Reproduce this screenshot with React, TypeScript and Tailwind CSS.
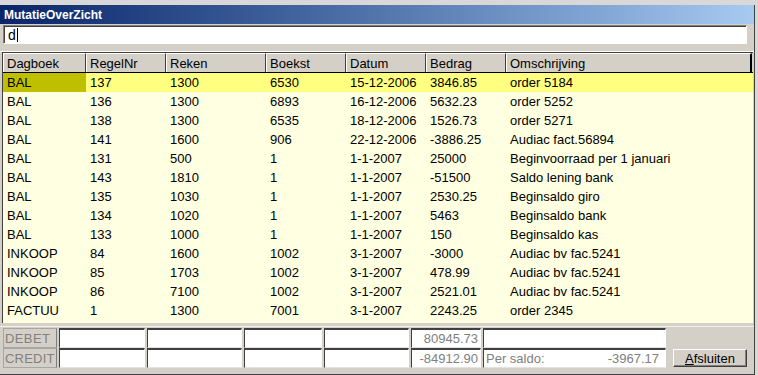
import React from "react";

const cols = [83, 80, 100, 80, 80, 80, 246];
const headers = ["Dagboek", "RegelNr", "Reken", "Boekst", "Datum", "Bedrag", "Omschrijving"];
const rows: string[][] = [
  ["BAL", "137", "1300", "6530", "15-12-2006", "3846.85", "order 5184"],
  ["BAL", "136", "1300", "6893", "16-12-2006", "5632.23", "order 5252"],
  ["BAL", "138", "1300", "6535", "18-12-2006", "1526.73", "order 5271"],
  ["BAL", "141", "1600", "906", "22-12-2006", "-3886.25", "Audiac fact.56894"],
  ["BAL", "131", "500", "1", "1-1-2007", "25000", "Beginvoorraad per 1 januari"],
  ["BAL", "143", "1810", "1", "1-1-2007", "-51500", "Saldo lening bank"],
  ["BAL", "135", "1030", "1", "1-1-2007", "2530.25", "Beginsaldo giro"],
  ["BAL", "134", "1020", "1", "1-1-2007", "5463", "Beginsaldo bank"],
  ["BAL", "133", "1000", "1", "1-1-2007", "150", "Beginsaldo kas"],
  ["INKOOP", "84", "1600", "1002", "3-1-2007", "-3000", "Audiac bv fac.5241"],
  ["INKOOP", "85", "1703", "1002", "3-1-2007", "478.99", "Audiac bv fac.5241"],
  ["INKOOP", "86", "7100", "1002", "3-1-2007", "2521.01", "Audiac bv fac.5241"],
  ["FACTUU", "1", "1300", "7001", "3-1-2007", "2243.25", "order 2345"],
];

const footW = [86, 95, 78, 85, 70, 183];

function FootCell({ w, children, className = "" }: { w: number; children?: React.ReactNode; className?: string }) {
  return (
    <div
      className={"h-[20px] bg-white border-t-2 border-l border-t-[#404040] border-l-[#404040] border-r border-b border-r-[#ffffff] border-b-[#e4e2dc] flex items-center px-[2px] text-[#808080] " + className}
      style={{ width: w }}
    >
      {children}
    </div>
  );
}

export default function App() {
  return (
    <div className="w-[758px] h-[375px] bg-[#d8d8d8] pt-[5px] overflow-hidden font-['Liberation_Sans',Arial,sans-serif] text-[13px] leading-none">
      <div className="w-[755px] h-[370px] bg-[#d4d0c8] border-r border-r-[#404040] border-b border-b-[#404040] flex flex-col">
        <div className="h-[19px] bg-gradient-to-r from-[#0a246a] to-[#a6caf0] flex items-center pl-[4px] text-white font-bold text-[12px]">
          MutatieOverZicht
        </div>
        <div className="mt-[1px] ml-[3px] w-[744px] h-[19px] bg-white border border-t-[#808080] border-l-[#808080] border-r-white border-b-white shadow-[inset_1px_1px_0_#404040] flex items-center pl-[4px] text-[14px] text-black">
          d<span className="inline-block w-[1px] h-[14px] bg-black ml-[1px]" />
        </div>
        <div className="h-[8px] border-b border-b-[#ffffff]" />
        <div className="ml-[2px] w-[751px] h-[271px] border-l border-l-[#404040] border-t border-t-[#404040] bg-[#ffffe1] flex flex-col">
          <div className="flex h-[20px] border-b border-b-[#000000] bg-[#d4d0c8]">
            {headers.map((h, i) => (
              <div
                key={h}
                className={
                  "h-full flex items-center pl-[3px] border-l border-l-white border-t border-t-white text-black " +
                  (i === headers.length - 1 ? "border-r-2 border-r-[#000000]" : "border-r border-r-[#404040]")
                }
                style={{ width: cols[i] }}
              >
                {h}
              </div>
            ))}
          </div>
          {rows.map((r, ri) => (
            <div key={ri} className={"flex h-[19px] " + (ri === 0 ? "bg-[#ffff80]" : "")}>
              {r.map((c, ci) => (
                <div
                  key={ci}
                  className={"h-full flex items-center pl-[4px] text-black whitespace-nowrap " + (ri === 0 && ci === 0 ? "bg-[#bfbf00]" : "")}
                  style={{ width: cols[ci] }}
                >
                  {c}
                </div>
              ))}
            </div>
          ))}
        </div>
        <div className="mt-[3px] border-t border-t-[#f0efeb] pt-[1px] flex">
          <div className="ml-[3px] flex flex-col">
            <div className="flex gap-[2px]">
              <div className="w-[54px] h-[20px] border border-[#a8a6a0] border-r-[#808080] flex items-center pl-[1px] text-[#808080] text-[13px] tracking-[0.4px] whitespace-nowrap overflow-hidden">DEBET</div>
              {footW.map((w, i) => (
                <FootCell key={i} w={w} className={i === 4 ? "justify-end" : ""}>
                  {i === 4 ? "80945.73" : null}
                </FootCell>
              ))}
            </div>
            <div className="flex gap-[2px]">
              <div className="w-[54px] h-[20px] border border-[#a8a6a0] border-r-[#808080] flex items-center pl-[1px] text-[#808080] text-[13px] tracking-[0.2px] whitespace-nowrap overflow-hidden">CREDIT</div>
              {footW.map((w, i) => (
                <FootCell key={i} w={w} className={i === 4 ? "justify-end" : i === 5 ? "justify-between" : ""}>
                  {i === 4 ? "-84912.90" : i === 5 ? (
                    <>
                      <span>Per saldo:</span>
                      <span className="pr-[4px]">-3967.17</span>
                    </>
                  ) : null}
                </FootCell>
              ))}
            </div>
          </div>
          <div className="ml-[7px] self-end mb-[1px]">
            <button className="w-[74px] h-[18px] bg-[#d4d0c8] border border-t-white border-l-white border-r-[#404040] border-b-[#404040] shadow-[inset_-1px_-1px_0_#808080] flex items-center justify-center text-black text-[13px] leading-none">
              <span><span className="underline">A</span>fsluiten</span>
            </button>
          </div>
        </div>
      </div>
    </div>
  );
}
